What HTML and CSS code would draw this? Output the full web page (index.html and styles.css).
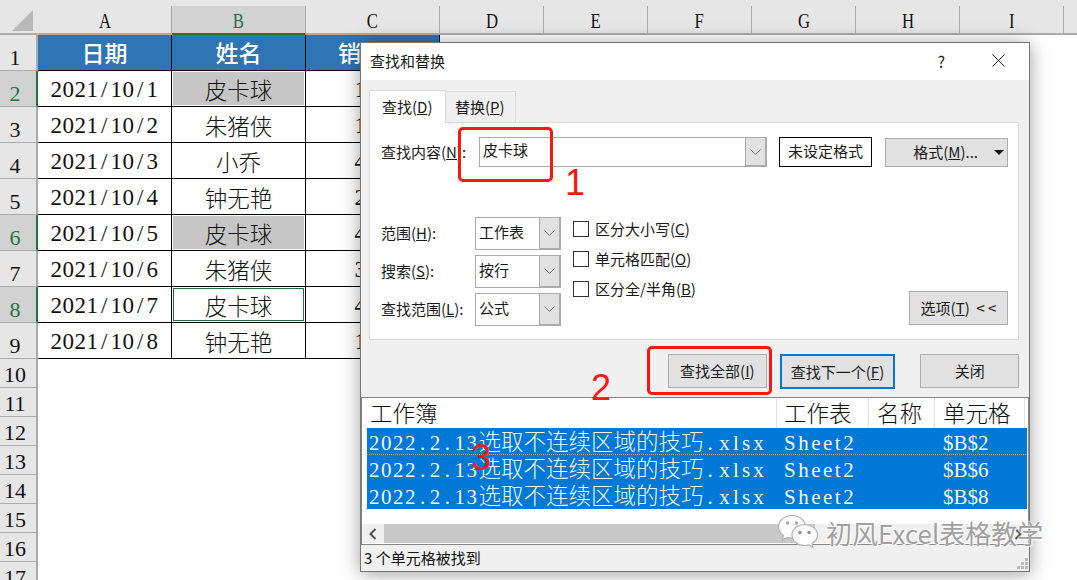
FILE: index.html
```html
<!DOCTYPE html>
<html lang="zh-CN">
<head>
<meta charset="utf-8">
<title>查找和替换</title>
<link rel="stylesheet" href="styles.css">
</head>
<body>
<div class="app">
  <div class="sheet">
    <div class="strip"></div>
    <div class="corner"><svg width="21" height="21" viewBox="0 0 21 21"><polygon points="0,21 21,21 21,0" fill="#b9b9b9"/></svg></div>
    <div class="ch"><span>A</span></div><div class="ch ch-on"><span>B</span></div><div class="ch"><span>C</span></div><div class="ch"><span>D</span></div><div class="ch"><span>E</span></div><div class="ch"><span>F</span></div><div class="ch"><span>G</span></div><div class="ch"><span>H</span></div><div class="ch"><span>I</span></div><div class="ch"></div>

    <div class="rh">1</div><div class="c th">日期</div><div class="c th">姓名</div><div class="c th">销售额</div>
    <div class="rh rh-on">2</div><div class="c num">2021<i>/</i>10<i>/</i>1</div><div class="c nm hit">皮卡球</div><div class="c num">156</div>
    <div class="rh">3</div><div class="c num">2021<i>/</i>10<i>/</i>2</div><div class="c nm">朱猪侠</div><div class="c num">128</div>
    <div class="rh">4</div><div class="c num">2021<i>/</i>10<i>/</i>3</div><div class="c nm">小乔</div><div class="c num">432</div>
    <div class="rh">5</div><div class="c num">2021<i>/</i>10<i>/</i>4</div><div class="c nm">钟无艳</div><div class="c num">267</div>
    <div class="rh rh-on">6</div><div class="c num">2021<i>/</i>10<i>/</i>5</div><div class="c nm hit">皮卡球</div><div class="c num">451</div>
    <div class="rh">7</div><div class="c num">2021<i>/</i>10<i>/</i>6</div><div class="c nm">朱猪侠</div><div class="c num">389</div>
    <div class="rh rh-on">8</div><div class="c num">2021<i>/</i>10<i>/</i>7</div><div class="c nm active">皮卡球</div><div class="c num">476</div>
    <div class="rh">9</div><div class="c num">2021<i>/</i>10<i>/</i>8</div><div class="c nm">钟无艳</div><div class="c num">143</div>
    <div class="rh">10</div>
    <div class="rh">11</div>
    <div class="rh">12</div>
    <div class="rh">13</div>
    <div class="rh">14</div>
    <div class="rh">15</div>
    <div class="rh">16</div>
    <div class="rh">17</div>
  </div>

  <div class="dialog">
    <div class="titlebar">
      <span class="title">查找和替换</span>
      <span class="help">?</span>
      <svg class="close" width="13" height="13" viewBox="0 0 13 13"><path d="M0.5 0.5L12.5 12.5M12.5 0.5L0.5 12.5" stroke="#222" stroke-width="1" fill="none"/></svg>
    </div>
    <div class="body">
      <div class="tabs">
        <div class="tab tab-on">查找(<u>D</u>)</div>
        <div class="tab">替换(<u>P</u>)</div>
      </div>
      <div class="panel">
        <div class="find-row">
          <span class="find-label">查找内容(<u>N</u>):</span>
          <div class="combo find-combo"><span class="combo-text">皮卡球</span><span class="arrow"><svg width="11" height="6" viewBox="0 0 11 6"><path d="M0.5 0.5L5.5 5.5L10.5 0.5" stroke="#777" fill="none"/></svg></span></div>
          <div class="noformat">未设定格式</div>
          <div class="btn fmt"><span class="fmt-text">格式(<u>M</u>)...</span><span class="tri"></span></div>
        </div>
        <div class="opts">
          <div class="selects">
            <div class="sel-row"><span class="sel-label">范围(<u>H</u>):</span><div class="combo sel"><span class="combo-text">工作表</span><span class="arrow"><svg width="11" height="6" viewBox="0 0 11 6"><path d="M0.5 0.5L5.5 5.5L10.5 0.5" stroke="#777" fill="none"/></svg></span></div></div>
            <div class="sel-row"><span class="sel-label">搜索(<u>S</u>):</span><div class="combo sel"><span class="combo-text">按行</span><span class="arrow"><svg width="11" height="6" viewBox="0 0 11 6"><path d="M0.5 0.5L5.5 5.5L10.5 0.5" stroke="#777" fill="none"/></svg></span></div></div>
            <div class="sel-row"><span class="sel-label">查找范围(<u>L</u>):</span><div class="combo sel"><span class="combo-text">公式</span><span class="arrow"><svg width="11" height="6" viewBox="0 0 11 6"><path d="M0.5 0.5L5.5 5.5L10.5 0.5" stroke="#777" fill="none"/></svg></span></div></div>
          </div>
          <div class="checks">
            <label class="chk"><span class="box"></span><span>区分大小写(<u>C</u>)</span></label>
            <label class="chk"><span class="box"></span><span>单元格匹配(<u>O</u>)</span></label>
            <label class="chk"><span class="box"></span><span>区分全/半角(<u>B</u>)</span></label>
          </div>
          <div class="btn options"><span>选项(<u>T</u>) &nbsp;&lt; &lt;</span></div>
        </div>
      </div>
      <div class="actions">
        <div class="btn act"><span>查找全部(<u>I</u>)</span></div>
        <div class="btn act next"><span>查找下一个(<u>F</u>)</span></div>
        <div class="btn act shut">关闭</div>
      </div>
    </div>
    <div class="results">
      <div class="res-head">
        <span class="col c1">工作簿</span><span class="col c2">工作表</span><span class="col c3">名称</span><span class="col c4">单元格</span>
      </div>
      <div class="res-rows">
        <div class="res-row focus"><span class="rc r1">2022<i>.</i>2<i>.</i>13<span class="cj">选取不连续区域的技巧</span><i class="ext-dot">.</i><span class="ext">xlsx</span></span><span class="rc r2">Sheet2</span><span class="rc r3"></span><span class="rc r4">$B$2</span></div>
        <div class="res-row"><span class="rc r1">2022<i>.</i>2<i>.</i>13<span class="cj">选取不连续区域的技巧</span><i class="ext-dot">.</i><span class="ext">xlsx</span></span><span class="rc r2">Sheet2</span><span class="rc r3"></span><span class="rc r4">$B$6</span></div>
        <div class="res-row"><span class="rc r1">2022<i>.</i>2<i>.</i>13<span class="cj">选取不连续区域的技巧</span><i class="ext-dot">.</i><span class="ext">xlsx</span></span><span class="rc r2">Sheet2</span><span class="rc r3"></span><span class="rc r4">$B$8</span></div>
      </div>
      <div class="scroll">
        <span class="sb-btn"><svg width="8" height="12" viewBox="0 0 8 12"><path d="M6.5 1L1.5 6L6.5 11" stroke="#505050" stroke-width="2" fill="none"/></svg></span>
        <span class="sb-track"></span>
        <span class="sb-rest"><svg width="8" height="12" viewBox="0 0 8 12"><path d="M1.5 1L6.5 6L1.5 11" stroke="#505050" stroke-width="2" fill="none"/></svg></span>
      </div>
    </div>
    <div class="status">
      <span>3 个单元格被找到</span>
      <svg class="grip" width="11" height="11" viewBox="0 0 11 11"><path d="M8 0h3v3H8zM4 4h3v3H4zM8 4h3v3H8zM0 8h3v3H0zM4 8h3v3H4zM8 8h3v3H8z" fill="#bdbdbd"/></svg>
    </div>
  </div>

  <div class="mark m1"></div><span class="digit d1">1</span>
  <div class="mark m2"></div><span class="digit d2">2</span>
  <span class="digit d3">3</span>

  <div class="wm">
    <svg class="wm-icon" width="42" height="38" viewBox="0 0 42 38">
      <path d="M15 1.500C7.500 1.500 1.500 6.500 1.500 12.800C1.500 16.500 3.500 19.500 6.500 21.500L5.200 26L10.300 23.300C12 23.800 13.500 24 15 24C22.500 24 28.500 19 28.500 12.800C28.500 6.500 22.500 1.500 15 1.500Z" fill="#fff" stroke="#b4b4b4" stroke-width="1.200"/>
      <circle cx="10.500" cy="9" r="1.700" fill="#a8a8a8"/><circle cx="19.500" cy="9" r="1.700" fill="#a8a8a8"/>
      <path d="M27.500 10.500C20.500 10.500 15 15.200 15 21C15 26.800 20.500 31.500 27.500 31.500C29 31.500 30.300 31.300 31.600 30.900L36 33.500L35 29.500C38.500 27.500 40.500 24.500 40.500 21C40.500 15.200 34.500 10.500 27.500 10.500Z" fill="#fff" stroke="#b4b4b4" stroke-width="1.200"/>
      <circle cx="23" cy="18.500" r="1.700" fill="#8f8f8f"/><circle cx="32" cy="18.500" r="1.700" fill="#8f8f8f"/>
    </svg>
    <span class="wm-text">初风Excel表格教学</span>
  </div>
</div>
</body>
</html>
```
FILE: styles.css
```css
* { box-sizing: border-box; }
html, body { margin: 0; padding: 0; background: #fff; }
.app {
  position: relative;
  width: 1077px;
  height: 580px;
  overflow: hidden;
  font-family: "Noto Sans CJK SC", sans-serif;
  color: #1a1a1a;
}

/* Spreadsheet */
.sheet {
  display: grid;
  grid-template-columns: 38px 134px 134px 134px repeat(7, 104px);
  grid-template-rows: 6px 29px 36px repeat(8, 36px) repeat(8, 29px);
  width: 1077px;
  height: 580px;
  overflow: hidden;
}
.strip { grid-column: 1 / -1; background: #e6e6e6; }
.corner {
  display: flex;
  align-items: flex-start;
  justify-content: flex-end;
  padding: 4px 4px 0 0;
  background: #e6e6e6;
  border-right: 1px solid #e6e6e6;
  border-bottom: 2px solid #ababab;
}
.ch {
  display: flex;
  align-items: flex-end;
  justify-content: center;
  background: #e6e6e6;
  border-right: 1px solid #ababab;
  border-bottom: 2px solid #ababab;
  font: 22px/24px "Liberation Serif", serif;
  color: #111;
}
.ch span { display: inline-block; transform: scaleX(.76); }
.ch-on { background: #d2d2d2; color: #217346; border-bottom-color: #217346; }
.rh {
  grid-column: 1;
  display: flex;
  align-items: flex-end;
  justify-content: center;
  padding: 0 6px 1px 0;
  background: #e6e6e6;
  border-right: 2px solid #ababab;
  border-bottom: 1px solid #ababab;
  font: 22px/23px "Liberation Serif", serif;
  color: #111;
}
.rh-on { background: #d2d2d2; color: #217346; border-right-color: #217346; }
.c {
  display: flex;
  align-items: center;
  justify-content: center;
  padding-top: 3px;
  background: #fff;
  border-right: 1px solid #000;
  border-bottom: 1px solid #000;
  color: #111;
  white-space: nowrap;
}
.th { padding: 0 0 2px; background: #2e75b6; color: #fff; font-size: 23px; font-weight: 500; }
.num { font: 23px/24px "Liberation Serif", serif; letter-spacing: .500px; }
.num i { font-style: normal; padding: 0 2.500px; }
.nm { padding-top: 0; font-size: 22.500px; font-weight: 300; line-height: 28px; }
.hit { background: #c6c6c6; box-shadow: inset 0 0 0 1px #fff; }
.active { box-shadow: inset 0 0 0 1px #fff, inset 0 0 0 2px #217346; }

/* Dialog */
.dialog {
  position: absolute;
  left: 360px;
  top: 42px;
  width: 670px;
  height: 530px;
  display: flex;
  flex-direction: column;
  background: #f0f0f0;
  border: 1px solid #757575;
  box-shadow: 0 2px 18px rgba(0, 0, 0, .38);
  font-size: 15px;
  line-height: 20px;
}
.titlebar {
  flex: none;
  display: flex;
  align-items: center;
  height: 37px;
  background: #fff;
  padding: 0 24px 2px 9px;
}
.title { flex: 1; }
.help { margin-right: 47px; font-size: 16px; }
.close { display: block; }
.body { flex: none; height: 317px; padding: 9px 10px 0 8px; }
.tabs { display: flex; height: 33px; align-items: flex-end; }
.tab {
  height: 31px;
  padding: 5px 10px 0 9px;
  border: 1px solid #dadada;
  border-left: 0;
  border-bottom: 0;
  white-space: nowrap;
}
.tab-on {
  position: relative;
  z-index: 1;
  height: 33px;
  width: 77px;
  margin-bottom: -1px;
  padding: 6px 0 0 12px;
  background: #fff;
  border-left: 1px solid #dadada;
}
.panel {
  height: 218px;
  padding: 14px 10px 13px 11px;
  background: #fff;
  border: 1px solid #dadada;
}
.find-row { display: flex; align-items: center; height: 30px; }
.find-label { width: 98px; white-space: nowrap; }
.combo { display: flex; background: #fff; border: 1px solid #ababab; }
.combo-text { flex: 1; padding-left: 3px; white-space: nowrap; }
.arrow {
  flex: none;
  width: 22px;
  display: flex;
  align-items: center;
  justify-content: center;
  background: #e1e1e1;
  border: 1px solid #ababab;
  border-width: 1px 2px 2px 1px;
  margin: -1px -1px -1px 0;
}
.find-combo { width: 288px; height: 30px; line-height: 24px; }
.noformat {
  width: 93px;
  height: 30px;
  margin-left: 12px;
  border: 1.500px solid #000;
  background: #fff;
  text-align: center;
  line-height: 26px;
  white-space: nowrap;
}
.btn {
  display: flex;
  align-items: center;
  justify-content: center;
  background: #e1e1e1;
  border: 1px solid #adadad;
  white-space: nowrap;
}
.fmt { width: 123px; height: 29px; margin-left: 13px; justify-content: flex-end; padding-right: 2px; }
.fmt-text { margin-right: 16px; }
.tri { width: 0; height: 0; border: 5px solid transparent; border-top: 5px solid #111; border-bottom: 0; margin-right: 1px; }
.opts { display: flex; align-items: flex-start; height: 159px; padding-top: 50px; }
.selects { display: flex; flex-direction: column; gap: 5px; width: 180px; }
.sel-row { display: flex; align-items: center; height: 33px; }
.sel-label { width: 94px; padding-bottom: 2px; white-space: nowrap; }
.sel { width: 86px; height: 33px; line-height: 28px; }
.checks { display: flex; flex-direction: column; gap: 14px; padding-top: 4px; margin-left: 12px; }
.chk { display: flex; align-items: center; gap: 6px; height: 16px; white-space: nowrap; }
.box { flex: none; width: 16px; height: 16px; border: 1px solid #333; background: #fff; }
.options { width: 99px; height: 34px; margin-left: auto; align-self: flex-end; margin-bottom: 1px; }
.actions { display: flex; align-items: flex-start; margin-top: 14px; padding-left: 299px; }
.act { width: 99px; height: 34px; }
.next { width: 116px; height: 35px; margin-left: 13px; border: 2px solid #0078d7; }
.shut { margin-left: 25px; }

.results {
  flex: none;
  height: 147px;
  background: #fff;
  border-top: 1px solid #868686;
  border-left: 1px solid #868686;
  border-right: 1px solid #868686;
  display: flex;
  flex-direction: column;
  overflow: hidden;
}
.res-head { flex: none; display: flex; height: 30px; padding-left: 5px; font-size: 22.500px; font-weight: 300; line-height: 28px; color: #111; }
.col { display: block; height: 30px; border-right: 1px solid #e2e2e2; white-space: nowrap; }
.c1 { width: 410px; padding-left: 3px; }
.c2 { width: 92px; padding-left: 7px; }
.c3 { width: 66px; padding-left: 8px; }
.c4 { width: 90px; padding-left: 8px; }
.res-rows { flex: none; margin-left: 5px; width: 660px; background: #0078d7; color: #f4f8fc; }
.res-row { display: flex; height: 27px; font: 21px/30px "Liberation Serif", "Noto Sans CJK SC", serif; letter-spacing: 1.500px; white-space: nowrap; }
.focus { background-image: linear-gradient(90deg, #e8a25a 50%, transparent 50%); background-size: 2px 1px; background-repeat: repeat-x; background-position: 0 26px; }
.rc { display: block; }
.rc i { font-style: normal; padding: 0 3px; }
.rc .ext-dot { padding: 0 5px 0 4px; }
.ext { letter-spacing: 3.200px; }
.cj { font-family: "Noto Sans CJK SC", sans-serif; font-size: 22.500px; font-weight: 300; letter-spacing: 0; line-height: 20px; }
.r1 { width: 410px; padding-left: 2px; }
.r2 { width: 92px; padding-left: 7px; letter-spacing: 2.500px; }
.r3 { width: 66px; }
.r4 { width: 90px; padding-left: 8px; letter-spacing: 0; }
.scroll { flex: none; display: flex; height: 19px; margin-top: 15px; }
.sb-btn { flex: none; width: 22px; display: flex; align-items: center; justify-content: center; background: #f0f0f0; }
.sb-track { flex: none; width: 431px; background: #c8c8c8; }
.sb-rest { flex: 1; display: flex; align-items: center; justify-content: flex-end; padding-right: 6px; background: #f0f0f0; }
.status {
  flex: 1;
  display: flex;
  align-items: center;
  justify-content: space-between;
  padding: 0 1px 0 3px;
  border-top: 1px solid #868686;
  font-size: 15px;
  color: #111;
}
.grip { align-self: flex-end; margin-bottom: 2px; }

/* Annotations */
.mark { position: absolute; border: 3px solid #f5190f; border-radius: 5px; }
.m1 { left: 458px; top: 127px; width: 95px; height: 55px; }
.m2 { left: 647px; top: 346px; width: 125px; height: 49px; }
.digit { position: absolute; font: 36px/36px "Liberation Sans", sans-serif; color: #f5190f; }
.d1 { left: 565px; top: 165px; }
.d2 { left: 591px; top: 370px; }
.d3 { left: 471px; top: 440px; }

.wm { position: absolute; left: 777px; top: 514px; display: flex; align-items: center; gap: 7px; }
.wm-icon { display: block; }
.wm-text {
  font-size: 26px;
  line-height: 38px;
  color: #a0a0a0;
  white-space: nowrap;
  text-shadow: 0 0 2px #fff, 0 0 2px #fff, 1px 1px 1px #fff;
}
```
